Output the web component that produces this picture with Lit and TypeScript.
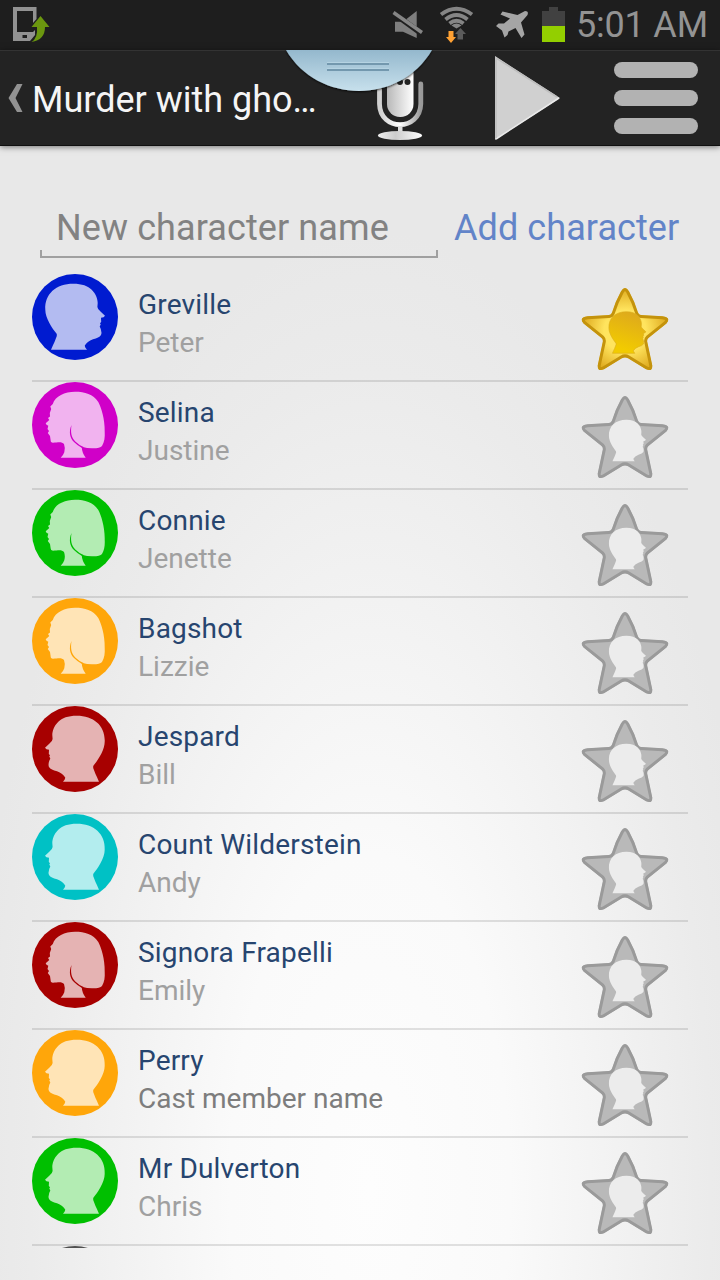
import { LitElement, html, svg, css, nothing } from "lit";
import { customElement, property } from "lit/decorators.js";

interface Character {
  name: string;
  cast: string;
  color: string;
  face: "right" | "left" | "woman";
  starred?: boolean;
  unset?: boolean;
}

const MAN =
  "M44.7 9.7C36 9.7 30 12 26.3 15.7C22 20 20.3 25 20.3 29L20.6 33Q20.5 35 17.5 37.5L13 41.7Q14 43.6 17 43.8L16.8 48L18 49.3L17.3 50.5L18.3 52.5L17.2 55Q16 59 17 61Q19 64 25 65.3Q31 67.5 33.3 71.7Q33 73.5 31 75.7H67Q65 71 63.5 68L61.2 62V60C66 54 72.7 44 72.7 35.7C73.5 20 62 9.7 44.7 9.7Z";
const WOMAN =
  "M43 9.7C33 9.7 23 14 20.8 22L18.3 24.5L19.2 27L17.8 31L18 34.5L16 36L17.3 38L13.7 41.3Q14 43 16.3 43.7L15.5 47L17 49L15.8 51L18 54L18.600 58Q18.500 60.700 21 60.700C27 60 30 59.500 32 62Q33.500 66 32.300 70.300Q31 74 28.700 75.700H53.700Q50 71 49.700 64.800Q56 66.500 61 66.300Q68 66.300 70 64C72.500 60 73 55 72.700 49.700C73 37 69 25 66.300 20C61 12 53 9.700 43 9.700Z";
const STAR =
  "M39 3.200Q43-3.200 47 3.200Q53 14 56 24.500Q56.800 26.800 59 27L80.500 28.200Q89.500 29.500 84.500 35.500L66.500 50Q64.900 51.500 65.200 53.500L70.300 77.500Q70.500 84 64 81.300L46 70.300Q43 68.500 40 70.300L22 81.300Q15.500 84 15.700 77.500L20.800 53.500Q21.100 51.500 19.500 50L1.500 35.500Q-3.500 29.500 5.500 28.200L27 27Q29.200 26.800 30 24.500Q33 14 39 3.200Z";

@customElement("character-avatar")
export class CharacterAvatar extends LitElement {
  @property() color = "";
  @property() face = "left";
  static styles = css`
    :host { display: block; width: 86px; height: 86px; flex: none; }
    svg { display: block; }
    .head { fill: #fff; fill-opacity: 0.7; }
  `;
  render() {
    const woman = this.face === "woman";
    return html`<svg width="86" height="86" viewBox="0 0 86 86">
      <circle cx="43" cy="43" r="43" fill=${this.color} />
      <path class="head" d=${woman ? WOMAN : MAN} transform=${this.face === "right" ? "translate(86 0) scale(-1 1)" : ""} />
      ${woman
        ? svg`<path d="M39.500 43C36.500 50 38 56 42 60Q45.500 63.500 50 66L52 65.300Q46.500 62.800 43.300 59.500C39 55 38.500 50 39.500 43Z" fill=${this.color} />`
        : nothing}
    </svg>`;
  }
}

@customElement("star-toggle")
export class StarToggle extends LitElement {
  @property({ type: Boolean }) on = false;
  static styles = css`
    :host { display: block; width: 86px; height: 82px; flex: none; }
    svg { display: block; overflow: visible; }
  `;
  render() {
    const on = this.on;
    return html`<svg width="86" height="82" viewBox="0 0 86 82">
      <defs>
        <radialGradient id="gold" gradientUnits="userSpaceOnUse" cx="43" cy="43" r="42">
          <stop offset="0.500" stop-color="#ffe45e" /><stop offset="1" stop-color="#e0ad22" />
        </radialGradient>
        <linearGradient id="face" x1="0" y1="0" x2="0.300" y2="1">
          <stop offset="0" stop-color="#dba520" /><stop offset="1" stop-color="#f2cb00" />
        </linearGradient>
        <clipPath id="edge"><path d=${STAR} /></clipPath>
      </defs>
      <path d=${STAR} fill=${on ? "url(#gold)" : "#b9b9b9"} stroke=${on ? "#c4930c" : "#9a9a9a"} stroke-width="6" clip-path="url(#edge)" />
      <path d=${MAN} transform="translate(72 17.600) scale(-.62 .63)"
        fill=${on ? "url(#face)" : "#ececec"} stroke=${on ? "#dcae1c" : "none"} stroke-width="1" />
    </svg>`;
  }
}

@customElement("status-bar")
export class StatusBar extends LitElement {
  static styles = css`
    :host { display: flex; align-items: flex-start; height: 50px; background: #1e1e1e; box-sizing: border-box; }
    svg { display: block; flex: none; }
    .space { width: 340px; }
    .clock { font: 36px/50px Roboto, sans-serif; color: #939393; white-space: nowrap; margin-left: 9px; letter-spacing: -0.200px; }
  `;
  render() {
    return html`
      <svg width="50" height="50" viewBox="0 0 50 50">
        <path d="M13 7H36.500V19L33 23V11H17V32H33L35 30V35L30 41H13Z" fill="#929292" />
        <rect x="22.500" y="35" width="4.500" height="3" fill="#1e1e1e" />
        <path d="M31.500 42Q38 38 37 27H31.500L40.500 16L49.500 27H45Q45 40 31.500 42Z" fill="#6b970f" />
      </svg>
      <div class="space"></div>
      <svg width="177" height="50" viewBox="390 0 177 50">
        <path d="M395 21.700H403L416.700 11V38L403 31.700H395Z" fill="#7e7e7e" />
        <path d="M392.500 12.500L422 34" stroke="#1e1e1e" stroke-width="5.500" />
        <path d="M393.500 12.500L422 32.500" stroke="#858585" stroke-width="3.500" />
        <g fill="none" stroke="#858585" stroke-width="3.900">
          <path d="M441 14.500Q456.500 3 472 14.500" />
          <path d="M445.500 19.500Q456.500 10.500 467.500 19.500" />
          <path d="M449.500 23.500Q456.500 18 463.500 23.500" />
        </g>
        <path d="M451.500 25.500Q456.500 21.500 461.500 25.500L456.500 28.500Z" fill="#858585" />
        <path d="M448.500 31H453.500V37H456L451 43L446 37H448.500Z" fill="#ffa133" />
        <path d="M457.500 39.500V34H455L460.500 28L466 34H463V39.500Z" fill="#5b5b5b" />
        <path d="M525 11Q529 11 527.500 15L521 22.500L524.500 34.500L521.500 38L515.500 28L508.500 31.500L507.500 35L504.500 37.500L502 30.500L496 26L498.500 23.500H504L510 18.500L500.500 14.500L502.500 11.500L517.500 15Z" fill="#a5a5a5" />
        <path d="M549 7H558V11H565V26H542V11H549Z" fill="#414141" />
        <rect x="542" y="26" width="23" height="16" fill="#93cf00" />
      </svg>
      <span class="clock">5:01 AM</span>
    `;
  }
}

@customElement("action-bar")
export class ActionBar extends LitElement {
  static styles = css`
    :host { display: flex; align-items: flex-start; position: relative; height: 96px; background: #232323; border-top: 1px solid #333; border-bottom: 1px solid #101010; box-sizing: border-box; box-shadow: 0 1px 6px rgba(0, 0, 0, 0.500); z-index: 1; }
    svg { display: block; flex: none; }
    .title { width: 345px; font: 36px/98px Roboto, sans-serif; color: #f5f5f5; white-space: nowrap; }
    .tab { position: absolute; left: 280px; top: -1px; }
  `;
  render() {
    return html`
      <svg width="32" height="95" viewBox="0 51 32 95"><path d="M17 84H22.500L15.500 98L22.500 112H17L8.500 98Z" fill="#929292" /></svg>
      <span class="title">Murder with gho…</span>
      <svg width="343" height="95" viewBox="377 51 343 95">
        <defs>
          <linearGradient id="m"><stop stop-color="#b8b8b8" /><stop offset="1" stop-color="#fff" /></linearGradient>
          <linearGradient id="c" x1="0" x2="1"><stop stop-color="#d0d0d0" /><stop offset=".5" stop-color="#fff" /><stop offset="1" stop-color="#999" /></linearGradient>
          <linearGradient id="b" x1="0" x2="1"><stop stop-color="#eee" /><stop offset=".4" stop-color="#ccc" /><stop offset="1" stop-color="#fff" /></linearGradient>
        </defs>
        <rect x="387" y="60" width="26.500" height="57" rx="13" fill="url(#m)" />
        <circle cx="400" cy="82" r="3" fill="#232323" /><circle cx="407.500" cy="82" r="3" fill="#232323" />
        <path d="M379.500 84V104C380 131.500 420 131.500 420.800 104V84" fill="none" stroke="url(#c)" stroke-width="4.800" stroke-linecap="round" />
        <rect x="398" y="126" width="4.500" height="9" fill="#ddd" />
        <ellipse cx="400" cy="135.500" rx="22" ry="4.600" fill="url(#b)" />
        <path d="M495 56L560 98L495 140Z" fill="#d0d0d0" />
        <path d="M496 139L559 98" stroke="#e9e9e9" stroke-width="1.500" />
        <path d="M496 138V58L557 97" fill="none" stroke="#bdbdbd" stroke-width="1.500" />
        <g fill="#b2b2b2"><rect x="614" y="62" width="84" height="16" rx="8" /><rect x="614" y="90" width="84" height="16" rx="8" /><rect x="614" y="118" width="84" height="16" rx="8" /></g>
      </svg>
      <svg class="tab" width="160" height="48" viewBox="280 50 160 48">
        <defs>
          <linearGradient id="t" x2="0" y2="1"><stop stop-color="#94b8cd" /><stop offset="1" stop-color="#c7e0ec" /></linearGradient>
          <filter id="s" x="-10%" y="-10%" width="120%" height="140%"><feDropShadow dx="0" dy="1" stdDeviation="1.200" flood-opacity=".8" /></filter>
        </defs>
        <path d="M286 50C318 104.500 400 104.500 432 50Z" fill="url(#t)" filter="url(#s)" />
        <path d="M327 62.500H389M327 68.500H389" stroke="#b5d3e2" stroke-width="1" />
        <path d="M327 64H389M327 70H389" stroke="#7398ae" stroke-width="2" />
      </svg>
    `;
  }
}

@customElement("app-root")
export class AppRoot extends LitElement {
  static styles = css`
    :host { display: flex; flex-direction: column; width: 720px; height: 1280px; overflow: hidden; font-family: Roboto, sans-serif;
      background: radial-gradient(ellipse 400px 960px at 370px 1190px, #fdfdfd 0%, #fafafa 35%, #f1f1f1 65%, #ebebeb 85%, #e8e8e8 100%); }
    .entry { display: flex; height: 68px; margin: 54px 40px 0; flex: none; font-size: 36px; line-height: 56px; white-space: nowrap; }
    .field { width: 398px; height: 58px; box-sizing: border-box; padding-left: 16px; color: #828282; letter-spacing: 0.100px;
      background: linear-gradient(#a0a0a0, #a0a0a0) 0 100% / 100% 2px no-repeat, linear-gradient(#a0a0a0, #a0a0a0) 0 100% / 2px 8px no-repeat, linear-gradient(#a0a0a0, #a0a0a0) 100% 100% / 2px 8px no-repeat; }
    .add { margin-left: 16px; color: #6284c8; letter-spacing: 0.080px; }
    .list { height: 974px; margin: 6px 32px 0; overflow: hidden; flex: none; }
    .row { display: flex; height: 108px; box-sizing: border-box; border-bottom: 2px solid rgba(0, 0, 0, 0.110); }
    .text { flex: 1; padding: 12px 0 0 20px; font-size: 28px; line-height: 38px; white-space: nowrap; }
    .name { color: #27456f; letter-spacing: 0.180px; }
    .cast { color: #a0a0a0; }
    .unset { color: #7d7d7d; }
    .star { margin: 14px 20px 0 0; }
  `;
  characters: Character[] = [
    { name: "Greville", cast: "Peter", color: "#001bd0", face: "right", starred: true },
    { name: "Selina", cast: "Justine", color: "#d000c8", face: "woman" },
    { name: "Connie", cast: "Jenette", color: "#00bf00", face: "woman" },
    { name: "Bagshot", cast: "Lizzie", color: "#ffa60a", face: "woman" },
    { name: "Jespard", cast: "Bill", color: "#a70000", face: "left" },
    { name: "Count Wilderstein", cast: "Andy", color: "#00c1c5", face: "left" },
    { name: "Signora Frapelli", cast: "Emily", color: "#a70000", face: "woman" },
    { name: "Perry", cast: "Cast member name", color: "#ffa60a", face: "left", unset: true },
    { name: "Mr Dulverton", cast: "Chris", color: "#00bf00", face: "left" },
  ];
  render() {
    return html`
      <status-bar></status-bar>
      <action-bar></action-bar>
      <div class="entry"><div class="field">New character name</div><div class="add">Add character</div></div>
      <div class="list">
        ${this.characters.map(
          (c) => html`<div class="row">
            <character-avatar .color=${c.color} .face=${c.face}></character-avatar>
            <div class="text"><div class="name">${c.name}</div><div class="cast ${c.unset ? "unset" : ""}">${c.cast}</div></div>
            <star-toggle class="star" .on=${!!c.starred}></star-toggle>
          </div>`
        )}
        <div class="row"><character-avatar .color=${"#505050"} .face=${"left"}></character-avatar></div>
      </div>
    `;
  }
}
